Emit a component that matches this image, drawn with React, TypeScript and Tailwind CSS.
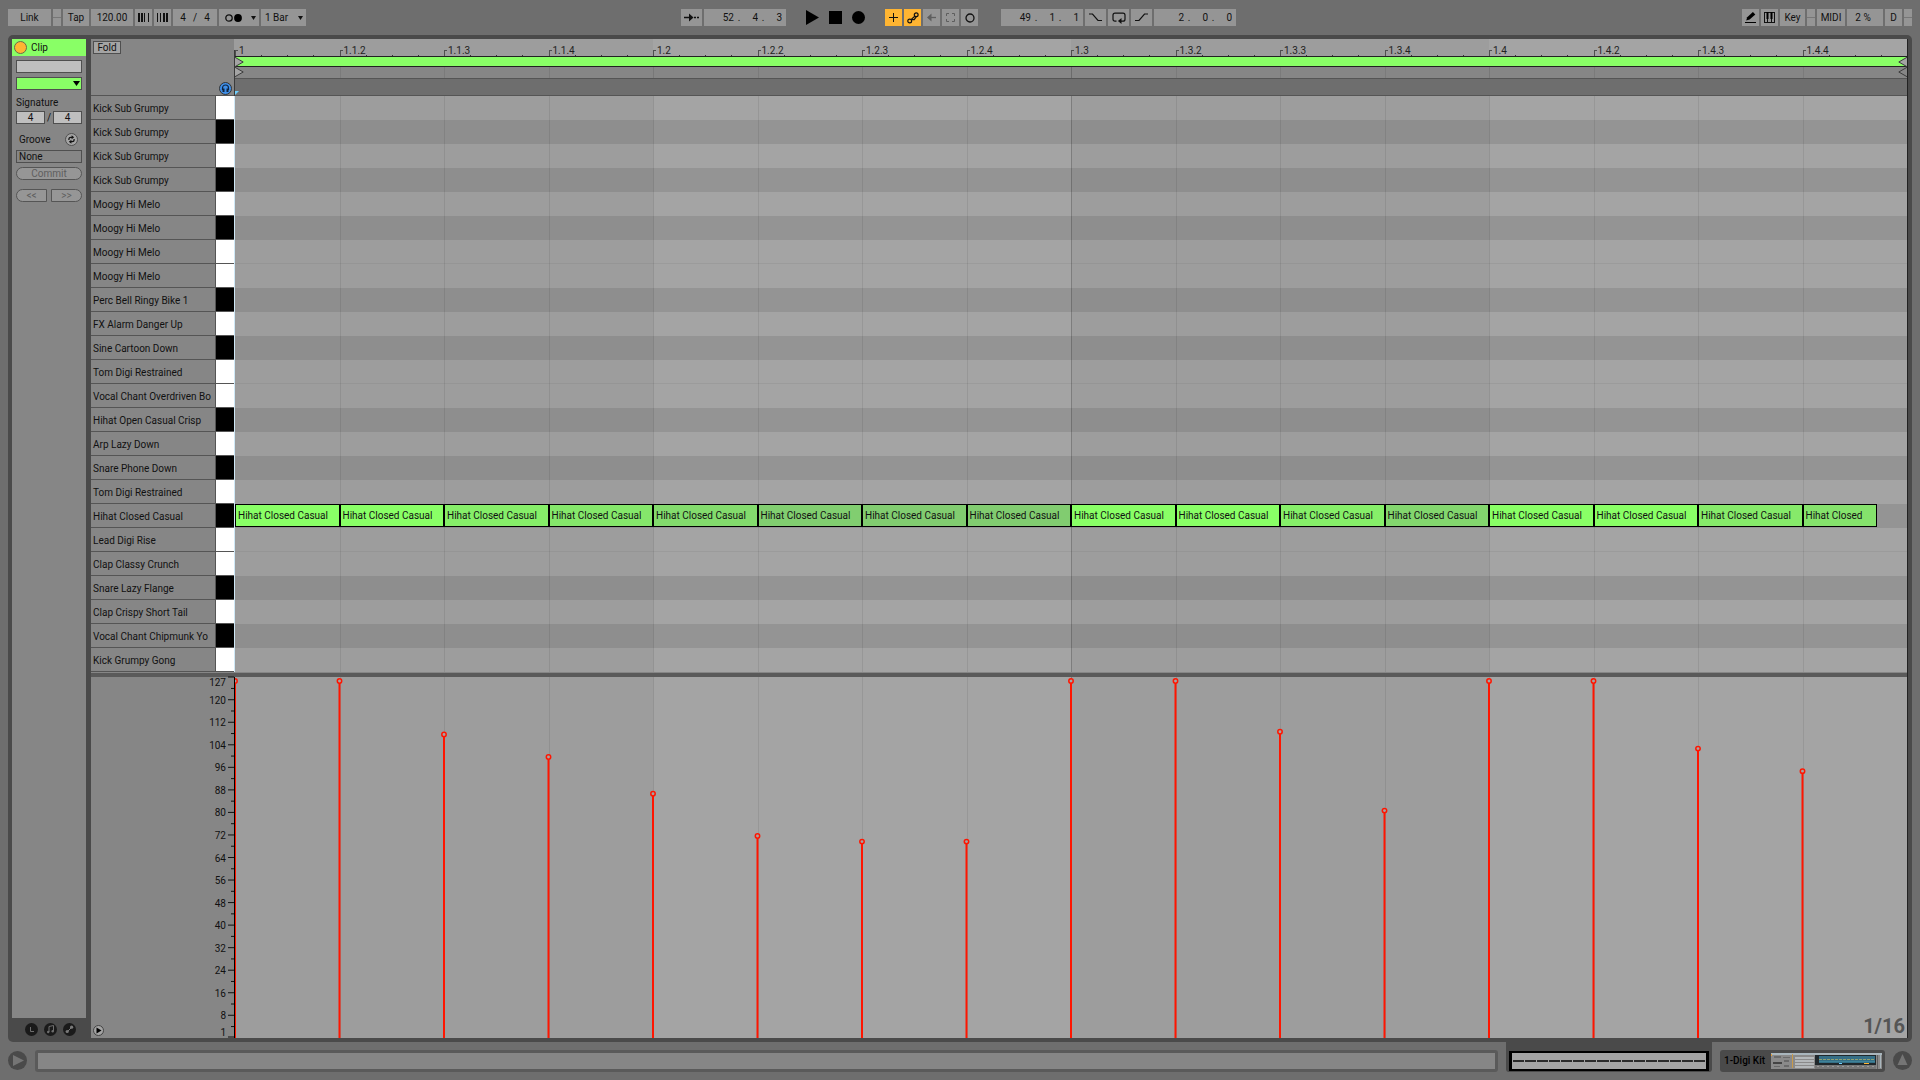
import React from "react";

type Note = {
  beat: string;
  velocity: number;
};

const pads: { name: string; black?: boolean }[] = [
  { name: "Kick Sub Grumpy" },
  { name: "Kick Sub Grumpy", black: true },
  { name: "Kick Sub Grumpy" },
  { name: "Kick Sub Grumpy", black: true },
  { name: "Moogy Hi Melo" },
  { name: "Moogy Hi Melo", black: true },
  { name: "Moogy Hi Melo" },
  { name: "Moogy Hi Melo" },
  { name: "Perc Bell Ringy Bike 1", black: true },
  { name: "FX Alarm Danger Up" },
  { name: "Sine Cartoon Down", black: true },
  { name: "Tom Digi Restrained" },
  { name: "Vocal Chant Overdriven Bo" },
  { name: "Hihat Open Casual Crisp", black: true },
  { name: "Arp Lazy Down" },
  { name: "Snare Phone Down", black: true },
  { name: "Tom Digi Restrained" },
  { name: "Hihat Closed Casual", black: true },
  { name: "Lead Digi Rise" },
  { name: "Clap Classy Crunch" },
  { name: "Snare Lazy Flange", black: true },
  { name: "Clap Crispy Short Tail" },
  { name: "Vocal Chant Chipmunk Yo", black: true },
  { name: "Kick Grumpy Gong" },
];

const notes: Note[] = [
  { beat: "1", velocity: 127 },
  { beat: "1.1.2", velocity: 127 },
  { beat: "1.1.3", velocity: 108 },
  { beat: "1.1.4", velocity: 100 },
  { beat: "1.2", velocity: 87 },
  { beat: "1.2.2", velocity: 72 },
  { beat: "1.2.3", velocity: 70 },
  { beat: "1.2.4", velocity: 70 },
  { beat: "1.3", velocity: 127 },
  { beat: "1.3.2", velocity: 127 },
  { beat: "1.3.3", velocity: 109 },
  { beat: "1.3.4", velocity: 81 },
  { beat: "1.4", velocity: 127 },
  { beat: "1.4.2", velocity: 127 },
  { beat: "1.4.3", velocity: 103 },
  { beat: "1.4.4", velocity: 95 },
];

const scale = [127, 120, 112, 104, 96, 88, 80, 72, 64, 56, 48, 40, 32, 24, 16, 8, 1];

const velocityY = (v: number) => `${((127 - v) / 126) * 100}%`;

// softer hits are drawn in a duller green
const noteColor = (v: number) => {
  const t = (127 - v) / 57;
  return `rgb(${Math.round(137 - 8 * t)}, ${Math.round(255 - 51 * t)}, ${Math.round(102 + 10 * t)})`;
};

const box = "flex h-[17px] items-center justify-center bg-[#959595]";

function Indicator() {
  return (
    <div className="flex h-[17px] w-2 items-center bg-[#959595]">
      <div className="h-px w-full bg-[#777]" />
    </div>
  );
}

function Position({ label, values }: { label: string; values: string[] }) {
  return (
    <div role="group" aria-label={label} className="flex h-[17px] w-[82px] items-center justify-end bg-[#959595] pr-1">
      {values.map((value, i) => (
        <React.Fragment key={i}>
          {i > 0 && <span className="w-[10px] text-center">.</span>}
          <input aria-label={`${label} ${i + 1}`} defaultValue={value} className="w-[14px] bg-transparent text-right" />
        </React.Fragment>
      ))}
    </div>
  );
}

function Caret() {
  return (
    <svg className="pointer-events-none absolute right-[3px] top-[7px]" width="5" height="4" viewBox="0 0 5 4">
      <path d="M0 0h5L2.5 4z" fill="#111" />
    </svg>
  );
}

function TransportBar() {
  return (
    <header className="grid h-[35px] shrink-0 grid-cols-[1fr_auto_1fr] items-start px-2 pt-[9px]">
      <div className="flex gap-[2px]">
        <button className={`${box} w-[43px]`}>Link</button>
        <Indicator />
        <button className={`${box} w-[26px]`}>Tap</button>
        <input aria-label="Tempo" defaultValue="120.00" className="h-[17px] w-[42px] bg-[#959595] text-center" />
        <button aria-label="Nudge down" className={`${box} w-[17px]`}>
          <svg width="11" height="9" viewBox="0 0 11 9">
            <path d="M0 0h2v9H0zM3 0h2v9H3zM6 0h1v9H6zM10 0h1v9h-1z" fill="#111" />
          </svg>
        </button>
        <button aria-label="Nudge up" className={`${box} w-[17px]`}>
          <svg width="11" height="9" viewBox="0 0 11 9">
            <path d="M0 0h1v9H0zM3 0h1v9H3zM6 0h2v9H6zM9 0h2v9H9z" fill="#111" />
          </svg>
        </button>
        <div className={`${box} w-[44px]`}>
          <input aria-label="Beats per bar" defaultValue="4" className="w-3 bg-transparent text-center" />
          <span className="w-3 text-center">/</span>
          <input aria-label="Beat unit" defaultValue="4" className="w-3 bg-transparent text-center" />
        </div>
        <button aria-label="Metronome" className={`${box} relative w-[40px] pr-3`}>
          <svg width="17" height="8" viewBox="0 0 17 8">
            <circle cx="4" cy="4" r="3.2" fill="none" stroke="#111" strokeWidth="1.3" />
            <circle cx="13" cy="4" r="3.9" fill="#000" />
          </svg>
          <Caret />
        </button>
        <div className="relative h-[17px] w-[45px] bg-[#959595]">
          <select aria-label="Quantization" className="h-full w-full appearance-none bg-transparent pl-1">
            <option>1 Bar</option>
          </select>
          <Caret />
        </div>
      </div>

      <div className="flex pr-[3px]">
        <div className="flex gap-[2px]">
          <button aria-label="Follow" className={`${box} w-[21px]`}>
            <svg width="16" height="9" viewBox="0 0 16 9">
              <path d="M0 4.5h6M10 4.5h2M13 4.5h2" stroke="#111" strokeWidth="1.5" />
              <path d="M5 0.5v8l4.5-4z" fill="#111" />
            </svg>
          </button>
          <Position label="Song position" values={["52", "4", "3"]} />
        </div>
        <div className="mx-5 flex h-[17px] items-center gap-[10px]">
          <button aria-label="Play">
            <svg width="13" height="15" viewBox="0 0 13 15"><path d="M0 0v15l13-7.5z" /></svg>
          </button>
          <button aria-label="Stop" className="h-[13px] w-[13px] bg-black" />
          <button aria-label="Record" className="h-[13px] w-[13px] rounded-full bg-black" />
        </div>
        <div className="mr-[23px] flex gap-[2px]">
          <button aria-label="Overdub" className="flex h-[17px] w-[17px] items-center justify-center bg-[#ffb532]">
            <svg width="9" height="9" viewBox="0 0 9 9"><path d="M4.5 0v9M0 4.5h9" stroke="#111" /></svg>
          </button>
          <button aria-label="Automation arm" className="flex h-[17px] w-[17px] items-center justify-center bg-[#ffb532]">
            <svg width="12" height="12" viewBox="0 0 12 12" fill="none" stroke="#111" strokeWidth="1.2">
              <circle cx="2.7" cy="9" r="1.9" />
              <circle cx="9.2" cy="2.8" r="1.9" />
              <path d="M4 7.600l3.800-3.400M4 7.600h3.200l2-2.800" />
            </svg>
          </button>
          <button aria-label="Re-enable automation" className={`${box} w-[17px]`}>
            <svg width="9" height="9" viewBox="0 0 9 9">
              <path d="M3 4.5h6" stroke="#5e5e5e" strokeWidth="1.3" />
              <path d="M0 4.5l4.5-4v8z" fill="#5e5e5e" />
            </svg>
          </button>
          <button aria-label="Capture" className={`${box} w-[17px]`}>
            <svg width="9" height="9" viewBox="0 0 9 9" fill="none" stroke="#5e5e5e">
              <path d="M0.5 3v-2.5h2.5M6 0.5h2.5v2.5M8.5 6v2.5h-2.5M3 8.5h-2.5v-2.5" />
            </svg>
          </button>
          <button aria-label="Session record" className={`${box} w-[17px]`}>
            <svg width="10" height="10" viewBox="0 0 10 10">
              <circle cx="5" cy="5" r="4" fill="none" stroke="#111" strokeWidth="1.3" />
            </svg>
          </button>
        </div>
        <div className="flex gap-[2px]">
          <Position label="Loop start" values={["49", "1", "1"]} />
          <button aria-label="Punch in" className={`${box} w-[21px]`}>
            <svg width="13" height="9" viewBox="0 0 13 9" fill="none" stroke="#111" strokeWidth="1.2">
              <path d="M0 1h3.5l5.5 6.5h4" />
            </svg>
          </button>
          <button aria-label="Loop" className={`${box} w-[21px]`}>
            <svg width="14" height="12" viewBox="0 0 14 12" fill="none" stroke="#111" strokeWidth="1.2">
              <path d="M4.5 9.2h-1.5q-2 0-2-2v-4q0-2 2-2h8q2 0 2 2v4q0 2-2 2h-2.5" />
              <path d="M9.5 6v6l-3.6-3z" fill="#111" stroke="none" />
            </svg>
          </button>
          <button aria-label="Punch out" className={`${box} w-[21px]`}>
            <svg width="13" height="9" viewBox="0 0 13 9" fill="none" stroke="#111" strokeWidth="1.2">
              <path d="M0 7.5h4l5.5-6.5h3.5" />
            </svg>
          </button>
          <Position label="Loop length" values={["2", "0", "0"]} />
        </div>
      </div>

      <div className="flex justify-end gap-[2px]">
        <button aria-label="Draw mode" className={`${box} w-[17px]`}>
          <svg width="11" height="11" viewBox="0 0 11 11">
            <path d="M1.2 8.600l1-3.400 5.700-5.200 2.400 2.400-5.700 5.200z" fill="#000" />
            <path d="M0 10.5h11" stroke="#000" />
          </svg>
        </button>
        <button aria-label="Computer MIDI keyboard" className={`${box} w-[17px]`}>
          <svg width="11" height="11" viewBox="0 0 11 11">
            <rect x="0.5" y="0.5" width="10" height="10" fill="none" stroke="#111" />
            <path d="M3.5 0v11M7.5 0v11" stroke="#111" />
            <path d="M2.5 0h2v7h-2zM6.5 0h2v7h-2z" fill="#000" />
          </svg>
        </button>
        <button className={`${box} w-[25px]`}>Key</button>
        <Indicator />
        <button className={`${box} w-[28px]`}>MIDI</button>
        <div className={`${box} w-[36px] pr-1`}>2 %</div>
        <div className={`${box} w-[17px]`}>D</div>
        <Indicator />
      </div>
    </header>
  );
}

function ClipPanel() {
  const pill = "h-[13px] border border-[#555] bg-[#969696] text-center leading-[11px] text-[#5e5e5e]";
  return (
    <aside className="flex w-[74px] shrink-0 flex-col">
      <div className="flex h-[17px] items-center gap-1 bg-[#89ff66] pl-[2px]">
        <button aria-label="Clip activator" className="h-[13px] w-[13px] rounded-full border border-[#6b6b4a] bg-[#ffb532]" />
        <span>Clip</span>
      </div>
      <div className="flex flex-1 flex-col bg-[#868686] px-1 pt-1">
        <input aria-label="Clip name" className="h-[13px] w-full border border-[#4f4f4f] bg-[#bfbfbf]" />
        <div className="relative mt-1 h-[13px]">
          <select aria-label="Clip color" className="block h-full w-full appearance-none border border-[#4f4f4f] bg-[#89ff66]" />
          <svg className="pointer-events-none absolute right-[2px] top-1" width="7" height="5" viewBox="0 0 7 5">
            <path d="M0 0h7L3.5 5z" />
          </svg>
        </div>
        <span className="mb-px mt-[5px] h-[15px] leading-[15px]">Signature</span>
        <div className="flex h-[13px] items-center justify-between">
          <input aria-label="Signature numerator" defaultValue="4" className="h-[13px] w-[29px] border border-[#4f4f4f] bg-[#bfbfbf] text-center" />
          <span>/</span>
          <input aria-label="Signature denominator" defaultValue="4" className="h-[13px] w-[29px] border border-[#4f4f4f] bg-[#bfbfbf] text-center" />
        </div>
        <div className="mt-[9px] flex h-[13px] items-center justify-between pl-[3px] pr-1">
          <span>Groove</span>
          <button aria-label="Hot-swap groove" className="flex h-[13px] w-[13px] items-center justify-center rounded-full border border-[#4f4f4f] bg-[#a4a4a4]">
            <svg width="9" height="9" viewBox="0 0 9 9" fill="none" stroke="#111" strokeWidth="1.2">
              <path d="M1.900 5v-.8q0-1.900 1.900-1.900h1.200M7.100 4v.8q0 1.900-1.900 1.900h-1.200" />
              <path d="M4.600 0.300l2.600 2-2.600 2zM4.400 4.700l-2.600 2 2.600 2z" fill="#111" stroke="none" />
            </svg>
          </button>
        </div>
        <button aria-label="Groove" className="mt-1 h-[13px] border border-[#4f4f4f] pl-[2px] text-left leading-[11px]">None</button>
        <button className={`${pill} mt-1 rounded-full`}>Commit</button>
        <div className="mt-[9px] flex gap-1">
          <button className={`${pill} flex-1 rounded-l-full`}>&lt;&lt;</button>
          <button className={`${pill} flex-1 rounded-r-full`}>&gt;&gt;</button>
        </div>
      </div>
      <div className="flex h-5 items-center justify-center gap-[6px] pl-[3px] pt-[2px]">
        <button aria-label="Launch box">
          <svg width="13" height="13" viewBox="0 0 13 13">
            <circle cx="6.5" cy="6.5" r="6.5" fill="#1a1a1a" />
            <path d="M5.5 4v4.5h3.5" fill="none" stroke="#6e6e6e" />
          </svg>
        </button>
        <button aria-label="Notes box">
          <svg width="13" height="13" viewBox="0 0 13 13">
            <circle cx="6.5" cy="6.5" r="6.5" fill="#1a1a1a" />
            <path d="M5 9v-5.5l4.5-1v5.5" fill="none" stroke="#6e6e6e" />
            <circle cx="4.2" cy="9" r="1.2" fill="#6e6e6e" />
            <circle cx="8.7" cy="8.2" r="1.2" fill="#6e6e6e" />
          </svg>
        </button>
        <button aria-label="Envelopes box">
          <svg width="13" height="13" viewBox="0 0 13 13">
            <circle cx="6.5" cy="6.5" r="6.5" fill="#1a1a1a" />
            <path d="M4 9l5-5" stroke="#7a7a7a" />
            <circle cx="4.2" cy="8.5" r="1.6" fill="#7a7a7a" />
            <circle cx="8.6" cy="4.2" r="1.6" fill="#7a7a7a" />
          </svg>
        </button>
      </div>
    </aside>
  );
}

// quarter-note shading, alternating lighter and darker
function Quarters({ black = false }: { black?: boolean }) {
  const dark = black ? "bg-[#8e8e8e]" : "bg-[#9d9d9d]";
  const light = black ? "bg-[#949494]" : "bg-[#a4a4a4]";
  return (
    <>
      {[dark, light, dark, light].map((shade, i) => (
        <div key={i} className={`flex-1 ${shade}`} />
      ))}
    </>
  );
}

function GridLines() {
  return (
    <div className="pointer-events-none absolute inset-0 grid grid-cols-16">
      {notes.map((note, i) => (
        <div
          key={note.beat}
          className={i === 0 ? "" : i === 8 ? "border-l border-black/20" : i % 4 === 0 ? "border-l border-black/10" : "border-l border-black/8"}
        />
      ))}
    </div>
  );
}

function Marker({ flip = false, fill = "#a4a4a4" }: { flip?: boolean; fill?: string }) {
  return (
    <svg width="9" height="10" viewBox="0 0 9 10">
      <path d={flip ? "M9 0.3L0.8 5L9 9.7" : "M0 0.3L8.2 5L0 9.7"} fill={fill} stroke="#3c3c3c" />
    </svg>
  );
}

function Ruler() {
  return (
    <div className="flex h-[57px]">
      <div className="flex w-[143px] items-start justify-between border-b border-[#555] pl-[2px] pr-[2px] pt-[2px]">
        <button className="h-[13px] w-7 border border-[#4f4f4f] bg-[#a4a4a4] text-center leading-[11px]">Fold</button>
        <button aria-label="Preview" className="mt-[41px]">
          <svg width="13" height="13" viewBox="0 0 13 13">
            <circle cx="6.5" cy="6.5" r="6" fill="#3f8fe8" stroke="#333" />
            <path d="M3.500 8v-2a3 3 0 0 1 6 0v2" fill="none" stroke="#102540" strokeWidth="1.200" />
            <path d="M3.500 6.500h2v3.500h-2zM7.500 6.500h2v3.500h-2z" fill="#102540" />
          </svg>
        </button>
      </div>
      <div className="flex w-px flex-col bg-[#9d9d9d]">
        <div className="mt-[11px] flex-1 bg-[#3a3a3a]" />
      </div>
      <div className="relative flex flex-1 flex-col">
        <div className="relative flex h-[17px]">
          <Quarters />
          <div className="absolute inset-0 grid grid-cols-16">
            {notes.map((note) => (
              <div key={note.beat} className="relative">
                <div className="absolute bottom-0 left-0 h-[6px] w-[3px] border-l border-t border-[#4f4f4f]" />
                <span className="absolute left-1 top-[6px] leading-3 text-[#222]">{note.beat}</span>
                <div className="grid h-full grid-cols-4 items-end">
                  <i className="h-px" />
                  <i className="h-px w-px bg-[#333]" />
                  <i className="h-px w-px bg-[#333]" />
                  <i className="h-px w-px bg-[#333]" />
                </div>
              </div>
            ))}
          </div>
        </div>
        <div className="flex h-[11px] justify-between border-y border-[#222] bg-[#89ff66]">
          <Marker />
          <Marker flip />
        </div>
        <div className="relative flex h-[12px] justify-between border-b border-[#555] bg-[#868686]">
          <Marker />
          <Marker flip fill="#868686" />
          <GridLines />
        </div>
        <div className="flex h-[17px] items-end border-b border-[#555] bg-[#6e6e6e]">
          <svg width="4" height="4" viewBox="0 0 4 4"><path d="M0 0h4L0 4z" fill="#6fd0ff" /></svg>
        </div>
      </div>
    </div>
  );
}

function NoteLane() {
  return (
    <div className="absolute inset-x-0 top-0 grid h-[23px] grid-cols-16">
      {notes.map((note, i) => {
        const last = i === notes.length - 1;
        return (
          <div
            key={note.beat}
            className={`overflow-hidden whitespace-nowrap border border-black pl-[2px] leading-[21px] ${last ? "w-[71%]" : ""}`}
            style={{ backgroundColor: noteColor(note.velocity) }}
          >
            {last ? "Hihat Closed" : "Hihat Closed Casual"}
          </div>
        );
      })}
    </div>
  );
}

function PianoRoll() {
  return (
    <div className="flex bg-[#868686] pb-px">
      <div className="w-[143px]">
        {pads.map((pad, i) => (
          <div key={i} className="flex h-6 border-b border-[#555]">
            <div className="flex-1 overflow-hidden whitespace-nowrap border-r border-[#555] pl-[2px] pt-px leading-6">
              {pad.name}
            </div>
            <button aria-label={`Play ${pad.name}`} className={`w-[18px] ${pad.black ? "bg-black" : "bg-white"}`} />
          </div>
        ))}
      </div>
      <div className="w-px bg-[#cfe8f6]" />
      <div className="relative flex-1">
        {pads.map((pad, i) => (
          <div key={i} className="relative flex h-6">
            <Quarters black={pad.black} />
            {!pad.black && pads[i + 1] && !pads[i + 1].black && (
              <div className="absolute inset-x-0 bottom-0 h-px bg-black/5" />
            )}
            {pad.name === "Hihat Closed Casual" && <NoteLane />}
          </div>
        ))}
        <GridLines />
      </div>
    </div>
  );
}

function VelocityPane() {
  return (
    <div className="flex min-h-0 flex-1">
      <div className="flex w-[143px] items-end justify-between bg-[#868686]">
        <button aria-label="Show lanes" className="mb-[2px] ml-[2px]">
          <svg width="11" height="11" viewBox="0 0 11 11">
            <circle cx="5.5" cy="5.5" r="5" fill="#a4a4a4" stroke="#444" />
            <path d="M3.500 2.500v6l5-3z" />
          </svg>
        </button>
        <div className="h-full py-[3px]">
          <svg className="h-full w-[50px] overflow-visible">
            {scale.map((v, i) => {
              const shift = v === 127 ? -3 : v === 1 ? 2 : 0;
              const label = v === 127 ? 6 : v === 1 ? 1 : 4;
              return (
                <g key={v}>
                  <g transform={`translate(0 ${shift})`}>
                    <line x1="44" x2="50" y1={velocityY(v)} y2={velocityY(v)} stroke="#111" />
                  </g>
                  <g transform={`translate(0 ${label})`}>
                    <text x="42" y={velocityY(v)} textAnchor="end" fill="#111">{v}</text>
                  </g>
                  {i < scale.length - 1 && (
                    <line x1="47" x2="50" y1={velocityY((v === 127 ? 128 : v) - 4)} y2={velocityY((v === 127 ? 128 : v) - 4)} stroke="#111" />
                  )}
                </g>
              );
            })}
          </svg>
        </div>
      </div>
      <div className="w-px bg-black" />
      <div className="relative flex flex-1 overflow-hidden">
        <Quarters />
        <GridLines />
        <div className="absolute inset-0 pb-[2px] pt-1">
          <svg className="h-full w-full overflow-visible">
            {notes.map((note, i) => {
              const x = `${(i / notes.length) * 100}%`;
              return (
                <g key={note.beat} stroke="#ff1500">
                  <line x1={x} x2={x} y1={velocityY(note.velocity)} y2="102%" strokeWidth="2" />
                  <circle cx={x} cy={velocityY(note.velocity)} r="2.200" fill="#a4a4a4" strokeWidth="1.500" />
                </g>
              );
            })}
          </svg>
        </div>
        <span className="absolute bottom-[2px] right-[2px] text-[20px] font-bold leading-5 text-[#555]">1/16</span>
      </div>
    </div>
  );
}

function DeviceThumb() {
  return (
    <svg width="111" height="16" viewBox="0 0 111 16">
      <rect width="111" height="16" fill="#8a8a8a" />
      <rect width="111" height="2" fill="#a9b6bd" />
      <g fill="#6a6a6a">
        <rect x="3" y="3" width="7" height="2" />
        <rect x="12" y="4" width="7" height="1" />
        <rect x="2" y="9" width="9" height="2" fill="#444" />
        <rect x="13" y="7" width="5" height="2" />
        <rect x="13" y="12" width="5" height="2" />
        <rect x="3" y="13" width="6" height="1" />
      </g>
      <rect x="0" y="1" width="1" height="2" fill="#e0a040" />
      <rect x="21" y="1" width="1" height="14" fill="#c89a4a" />
      <g fill="#b4b8ba">
        <rect x="24" y="4" width="19" height="2" />
        <rect x="24" y="7" width="19" height="2" />
        <rect x="24" y="10" width="19" height="2" />
        <rect x="24" y="13" width="19" height="2" />
      </g>
      <rect x="44" y="2" width="61" height="10" fill="#20282c" />
      <rect x="48" y="3" width="56" height="7" fill="#356f86" />
      <path d="M48 6.5h56" stroke="#8fa070" strokeDasharray="3 1" />
      <path d="M48 8.5h56" stroke="#3f8399" />
      <rect x="44" y="12" width="61" height="4" fill="#777" />
      <path d="M46 13.500h58" stroke="#9a9a9a" strokeDasharray="2 3" />
      <rect x="68" y="10" width="3" height="1" fill="#6fd0ff" />
      <rect x="93" y="10" width="5" height="1" fill="#ffb532" />
      <rect x="106" y="2" width="1" height="14" fill="#5e5e5e" />
      <rect x="109" y="1" width="1" height="14" fill="#a9b6bd" />
    </svg>
  );
}

function StatusBar() {
  return (
    <footer className="flex h-[38px] shrink-0 items-start gap-2 px-2">
      <button aria-label="Info view" className="mt-[9px]">
        <svg width="19" height="19" viewBox="0 0 19 19">
          <circle cx="9.5" cy="9.5" r="9.5" fill="#4a4a4a" />
          <path d="M5 4v11l11-5.5z" fill="#757575" />
        </svg>
      </button>
      <div className="mt-2 h-[22px] flex-1 rounded-[3px] border-[3px] border-[#5a5a5a] bg-[#868686]" />
      <div className="h-[30px] w-[206px] rounded-b-[3px] bg-[#4a4a4a] px-[3px] pt-[9px]">
        <button aria-label="Clip view" className="flex h-5 w-full items-center gap-px border-2 border-black bg-[#a4a4a4]">
          <div className="h-full w-px bg-black" />
          {notes.map((note) => (
            <div key={note.beat} className="h-[2px] flex-1 bg-[#2a2a2a]" />
          ))}
          <div className="h-full w-px bg-black" />
        </button>
      </div>
      <button className="mt-2 flex h-[22px] w-[165px] items-center justify-between rounded-[3px] bg-[#4a4a4a] pl-1 pr-[3px] font-medium text-black">
        <span className="whitespace-nowrap">1-Digi Kit</span>
        <DeviceThumb />
      </button>
      <button aria-label="Hide detail view" className="mt-[9px]">
        <svg width="19" height="19" viewBox="0 0 19 19">
          <circle cx="9.5" cy="9.5" r="9.5" fill="#4a4a4a" />
          <path d="M4.5 14h10l-5-11z" fill="#757575" />
        </svg>
      </button>
    </footer>
  );
}

export default function App() {
  return (
    <div className="flex h-screen flex-col overflow-hidden bg-[#6e6e6e] font-[Roboto,sans-serif] text-[10px] leading-3 text-[#111]">
      <TransportBar />
      <main className="mx-2 flex min-h-0 flex-1 gap-[5px] rounded-[5px] bg-[#4a4a4a] p-1">
        <ClipPanel />
        <section className="flex min-w-0 flex-1 flex-col border-r border-[#222] bg-[#868686]">
          <Ruler />
          <PianoRoll />
          <div className="h-1 bg-[#5a5a5a]" />
          <VelocityPane />
        </section>
      </main>
      <StatusBar />
    </div>
  );
}
